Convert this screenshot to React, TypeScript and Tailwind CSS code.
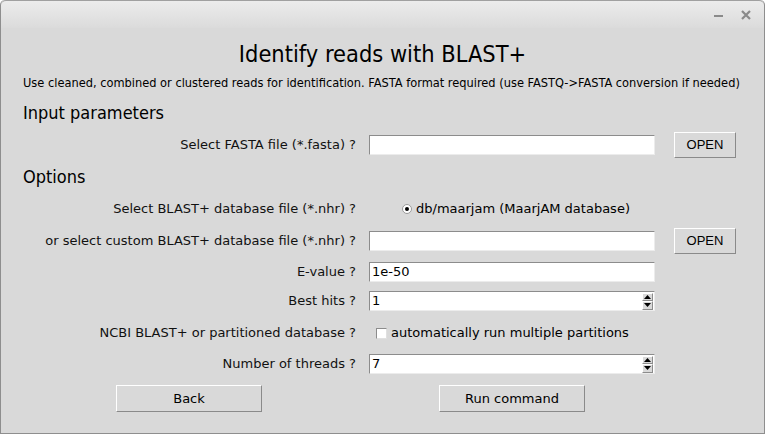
import React from 'react'

const sans = "font-['DejaVu_Sans',sans-serif]"
const cond = "font-['DejaVu_Sans_Condensed','DejaVu_Sans',sans-serif] [font-stretch:condensed]"

function Entry({ value = '' }: { value?: string }) {
  return (
    <div
      className={`w-[286px] h-[20px] bg-white border-t border-l border-t-[#8c8c8c] border-l-[#8c8c8c] border-b border-r border-b-[#ececec] border-r-[#ececec] flex items-center pl-[2px] text-[13px] text-black ${sans}`}
    >
      {value}
    </div>
  )
}

function Spin({ value }: { value: string }) {
  return (
    <div
      className={`w-[286px] h-[20px] bg-white border-t border-l border-t-[#8c8c8c] border-l-[#8c8c8c] border-b border-r border-b-[#ececec] border-r-[#ececec] flex items-center pl-[2px] text-[13px] text-black ${sans}`}
    >
      <span className="flex-1">{value}</span>
      <div className="flex flex-col w-[11px] h-[17px] mr-[1px]">
        <div className="h-[8px] flex items-center justify-center bg-[#d9d9d9] border-t border-l border-white border-b border-r border-b-[#8c8c8c] border-r-[#8c8c8c]">
          <svg width="7" height="4" viewBox="0 0 7 4">
            <path d="M0 4 L3.5 0 L7 4 Z" fill="#000" />
          </svg>
        </div>
        <div className="h-[9px] flex items-center justify-center bg-[#d9d9d9] border-t border-l border-white border-b border-r border-b-[#8c8c8c] border-r-[#8c8c8c]">
          <svg width="7" height="4" viewBox="0 0 7 4">
            <path d="M0 0 L7 0 L3.5 4 Z" fill="#000" />
          </svg>
        </div>
      </div>
    </div>
  )
}

function OpenBtn() {
  return (
    <button className="ml-[19px] w-[62px] h-[26px] bg-[#d9d9d9] border-t border-l border-white border-b border-r border-b-[#8a8a8a] border-r-[#8a8a8a] text-[13px] text-black font-['Liberation_Sans',Arial,sans-serif] flex items-center justify-center">
      OPEN
    </button>
  )
}

function Row({ label, h, children }: { label: string; h: string; children: React.ReactNode }) {
  return (
    <div className={`flex items-center ${h}`}>
      <div className={`w-[355px] text-right text-[13px] text-[#111] ${sans}`}>{label}</div>
      <div className="ml-[13px] flex items-center">{children}</div>
    </div>
  )
}

export default function App() {
  return (
    <div className="w-[765px] h-[434px] bg-[#d9d9d9] border border-t-0 border-[#8e8e8e] rounded-t-[5px] overflow-hidden flex flex-col relative">
      {/* title bar */}
      <div className="h-[28px] bg-gradient-to-b from-[#ececec] to-[#dbdbdb] border-t border-[#a0a0a0] rounded-t-[5px] flex items-center justify-end pr-[13px] gap-[17px]">
        <svg width="10" height="10" viewBox="0 0 10 10">
          <rect x="0" y="5" width="9" height="2" fill="#8a8a8a" />
        </svg>
        <svg width="10" height="10" viewBox="0 0 10 10">
          <path d="M1 1 L9 9 M9 1 L1 9" stroke="#8a8a8a" strokeWidth="2.2" />
        </svg>
      </div>

      <div className={`h-[30px] mt-[12px] flex items-center justify-center text-[23.4px] text-black ${cond}`}>
        Identify reads with BLAST+
      </div>
      <div className={`h-[18px] mt-[4px] pl-[22px] flex items-center text-[12.7px] text-black ${cond}`}>
        Use cleaned, combined or clustered reads for identification. FASTA format required (use FASTQ-&gt;FASTA conversion if needed)
      </div>
      <div className={`h-[24px] mt-[8px] pl-[22px] flex items-center text-[18px] text-black ${cond}`}>
        Input parameters
      </div>

      <div className="mt-[5px]">
        <Row label="Select FASTA file (*.fasta) ?" h="h-[32px]">
          <Entry />
          <OpenBtn />
        </Row>
      </div>

      <div className={`h-[31px] pl-[22px] flex items-center text-[18px] text-black ${cond}`}>Options</div>

      <Row label="Select BLAST+ database file (*.nhr) ?" h="h-[33px]">
        <div className={`flex items-center ml-[33px] text-[13px] text-black ${sans}`}>
          <span className="w-[10px] h-[10px] rounded-full bg-white border border-[#9a9a9a] flex items-center justify-center">
            <span className="w-[4px] h-[4px] rounded-full bg-black" />
          </span>
          <span className="ml-[4px]">db/maarjam (MaarjAM database)</span>
        </div>
      </Row>
      <Row label="or select custom BLAST+ database file (*.nhr) ?" h="h-[32px]">
        <Entry />
        <OpenBtn />
      </Row>
      <Row label="E-value ?" h="h-[30px]">
        <Entry value="1e-50" />
      </Row>
      <Row label="Best hits ?" h="h-[28px]">
        <Spin value="1" />
      </Row>
      <Row label="NCBI BLAST+ or partitioned database ?" h="h-[36px]">
        <div className={`flex items-center ml-[7px] text-[13px] text-black ${sans}`}>
          <span className="w-[11px] h-[11px] bg-white border-t border-l border-[#8c8c8c] border-b border-r border-b-[#e0e0e0] border-r-[#e0e0e0]" />
          <span className="ml-[4px]">automatically run multiple partitions</span>
        </div>
      </Row>
      <Row label="Number of threads ?" h="h-[26px]">
        <Spin value="7" />
      </Row>

      <div className={`flex mt-[8px] text-[13px] text-black ${sans}`}>
        <button className="ml-[115px] w-[146px] h-[27px] bg-[#d9d9d9] border-t border-l border-white border-b border-r border-b-[#8a8a8a] border-r-[#8a8a8a] flex items-center justify-center">
          Back
        </button>
        <button className="ml-[177px] w-[146px] h-[27px] bg-[#d9d9d9] border-t border-l border-white border-b border-r border-b-[#8a8a8a] border-r-[#8a8a8a] flex items-center justify-center">
          Run command
        </button>
      </div>
    </div>
  )
}
